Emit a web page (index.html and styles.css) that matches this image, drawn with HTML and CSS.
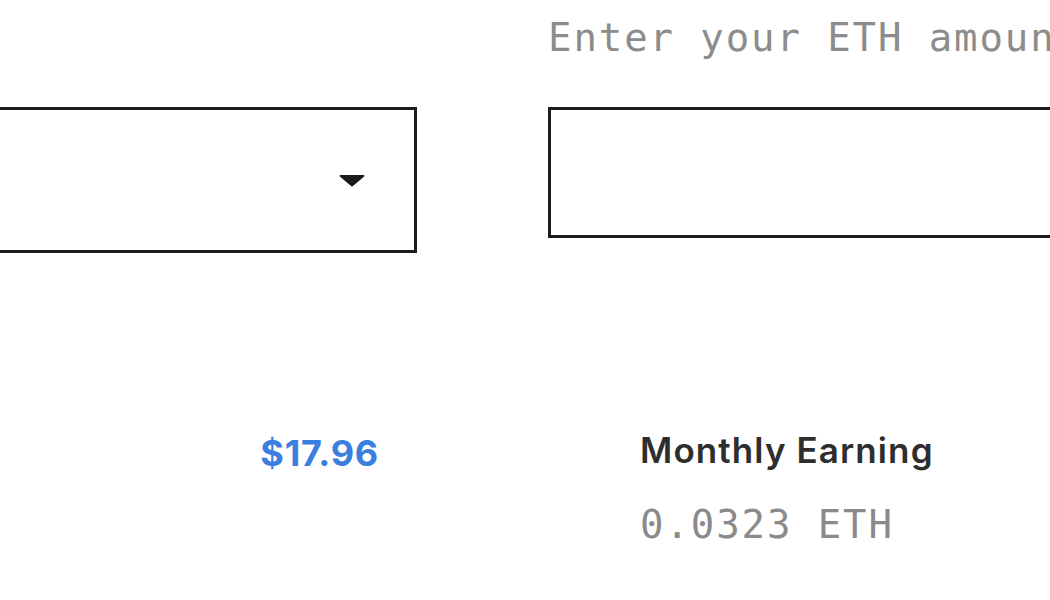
FILE: index.html
```html
<!DOCTYPE html>
<html>
  <head>
    <meta charset="utf-8" />
    <title>Mining calculator</title>

    <link rel="stylesheet" href="styles.css">
  </head>
  <body>
    <div class="calc">
      <!-- inputs -->
      <div class="field">
        <div class="label"></div>
        <div class="select">
          <svg class="caret" width="26" height="13" viewBox="0 0 26 13">
            <path d="M1.5 1h23c.9 0 1.3 1 .7 1.6L13.7 12.3c-.4.4-1 .4-1.4 0L.8 2.6C.2 2 .6 1 1.5 1z" fill="#1c1c1c" />
          </svg>
        </div>
      </div>

      <div class="field">
        <label class="label" for="eth-amount">Enter your ETH amount</label>
        <input type="text" class="input" id="eth-amount" />
      </div>

      <!-- results -->
      <div class="stat stat-usd">
        <span class="usd">$17.96</span>
      </div>

      <div class="stat stat-eth">
        <div class="stat-title">Monthly Earning</div>
        <div class="stat-value">0.0323 ETH</div>
      </div>
    </div>
  </body>
</html>
```

FILE: styles.css
```css
html,
body {
  margin: 0;
  padding: 0;
  background: #fff;
  overflow: hidden;
}

.calc {
  display: grid;
  grid-template-columns: 460px 560px;
  column-gap: 131px;
  align-items: start;
  margin-left: -43px;
  padding-top: 15px;
}

/* Inputs */

.label {
  display: block;
  height: 46px;
  margin-bottom: 46px;
  font-family: "DejaVu Sans Mono", monospace;
  font-size: 39px;
  line-height: 46px;
  letter-spacing: 1.9px;
  color: #8c8c8c;
  white-space: nowrap;
}

.select {
  display: flex;
  justify-content: flex-end;
  align-items: center;
  box-sizing: border-box;
  height: 146px;
  padding-right: 49px;
  border: 3px solid #1c1c1c;
}

.input {
  display: block;
  box-sizing: border-box;
  width: 100%;
  height: 131px;
  margin: 0;
  border: 3px solid #1c1c1c;
  border-radius: 0;
  outline: none;
  background: #fff;
}

/* Results */

.stat {
  margin-top: 177px;
}

.stat-usd {
  padding-top: 3px;
  padding-right: 38px;
  text-align: right;
}

.usd {
  font-family: Inter, sans-serif;
  font-weight: 700;
  font-size: 36px;
  line-height: 40px;
  letter-spacing: 0.8px;
  color: #3a7ee0;
}

.stat-eth {
  padding-left: 92px;
}

.stat-title {
  font-family: Inter, sans-serif;
  font-weight: 600;
  font-size: 35px;
  line-height: 40px;
  letter-spacing: 1.1px;
  color: #2e2e2e;
}

.stat-value {
  margin-top: 32px;
  font-family: "DejaVu Sans Mono", monospace;
  font-size: 39px;
  line-height: 46px;
  letter-spacing: 1.9px;
  color: #8a8a8a;
}
```
